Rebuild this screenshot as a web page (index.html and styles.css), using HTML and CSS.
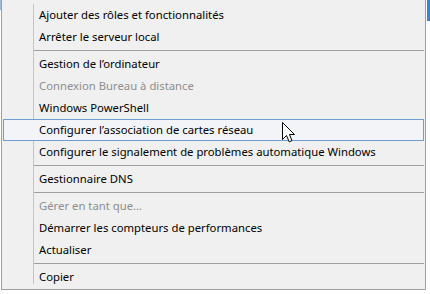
FILE: index.html
```
<!DOCTYPE html>
<html lang="fr">
<head>
<meta charset="utf-8">
<link rel="stylesheet" href="styles.css">
</head>
<body>
<div class="scene">
  <div class="bg-edge-left"></div>
  <div class="bg-edge-right"></div>
  <div class="menu">
    <div class="item">Ajouter des rôles et fonctionnalités</div>
    <div class="item">Arrêter le serveur local</div>
    <div class="sep"></div>
    <div class="item">Gestion de l’ordinateur</div>
    <div class="item disabled">Connexion Bureau à distance</div>
    <div class="item">Windows PowerShell</div>
    <div class="item hover">Configurer l’association de cartes réseau</div>
    <div class="item">Configurer le signalement de problèmes automatique Windows</div>
    <div class="sep"></div>
    <div class="item">Gestionnaire DNS</div>
    <div class="sep"></div>
    <div class="item disabled">Gérer en tant que…</div>
    <div class="item">Démarrer les compteurs de performances</div>
    <div class="item">Actualiser</div>
    <div class="sep"></div>
    <div class="item">Copier</div>
  </div>
  <svg class="cursor" width="14" height="22" viewBox="0 0 14 22">
    <path d="M0.5 0.5 L0.5 17.5 L4.5 13.5 L7.2 19.8 L10 18.6 L7.4 12.5 L12.5 12.5 Z" fill="#fff" stroke="#000" stroke-width="1" stroke-linejoin="miter"/>
  </svg>
</div>
</body>
</html>
```
FILE: styles.css
```
html, body {
  margin: 0;
  padding: 0;
  background: #ffffff;
}

.scene {
  position: relative;
  width: 430px;
  height: 294px;
  overflow: hidden;
}

.bg-edge-left {
  position: absolute;
  left: 0;
  top: 0;
  width: 1px;
  height: 10px;
  background: #9fb8d3;
}

.bg-edge-right {
  position: absolute;
  left: 427px;
  top: 0;
  width: 3px;
  height: 21px;
  background: #3a86cf;
}

.menu {
  box-sizing: border-box;
  margin-left: 1px;
  width: 425px;
  padding: 4px 0 1px 0;
  border-left: 1px solid #a0a0a0;
  border-right: 1px solid #a0a0a0;
  border-bottom: 1px solid #a0a0a0;
  background-color: #f0f0f0;
  background-image: linear-gradient(to right, transparent 31px, #c4c4c4 31px, #c4c4c4 32px, transparent 32px);
  background-repeat: no-repeat;
  background-position: 0 4px;
  background-size: 100% 280px;
  font-family: "Noto Sans", "DejaVu Sans", sans-serif;
  font-size: 11.3px;
  color: #000;
}

.item {
  box-sizing: border-box;
  height: 22px;
  line-height: 21px;
  padding-left: 37px;
  white-space: nowrap;
}

.item.disabled {
  color: #8e8e8e;
}

.item.hover {
  margin: 0 1px;
  padding-left: 35px;
  line-height: 19px;
  border: 1px solid #6f9fd2;
  background: #f2f4f7;
}

.sep {
  height: 5px;
  display: flex;
  align-items: center;
  padding: 0 1px 0 32px;
}

.sep::before {
  content: "";
  flex: 1;
  height: 1px;
  background: #a0a0a0;
}

.cursor {
  position: absolute;
  left: 282px;
  top: 122px;
}
```
